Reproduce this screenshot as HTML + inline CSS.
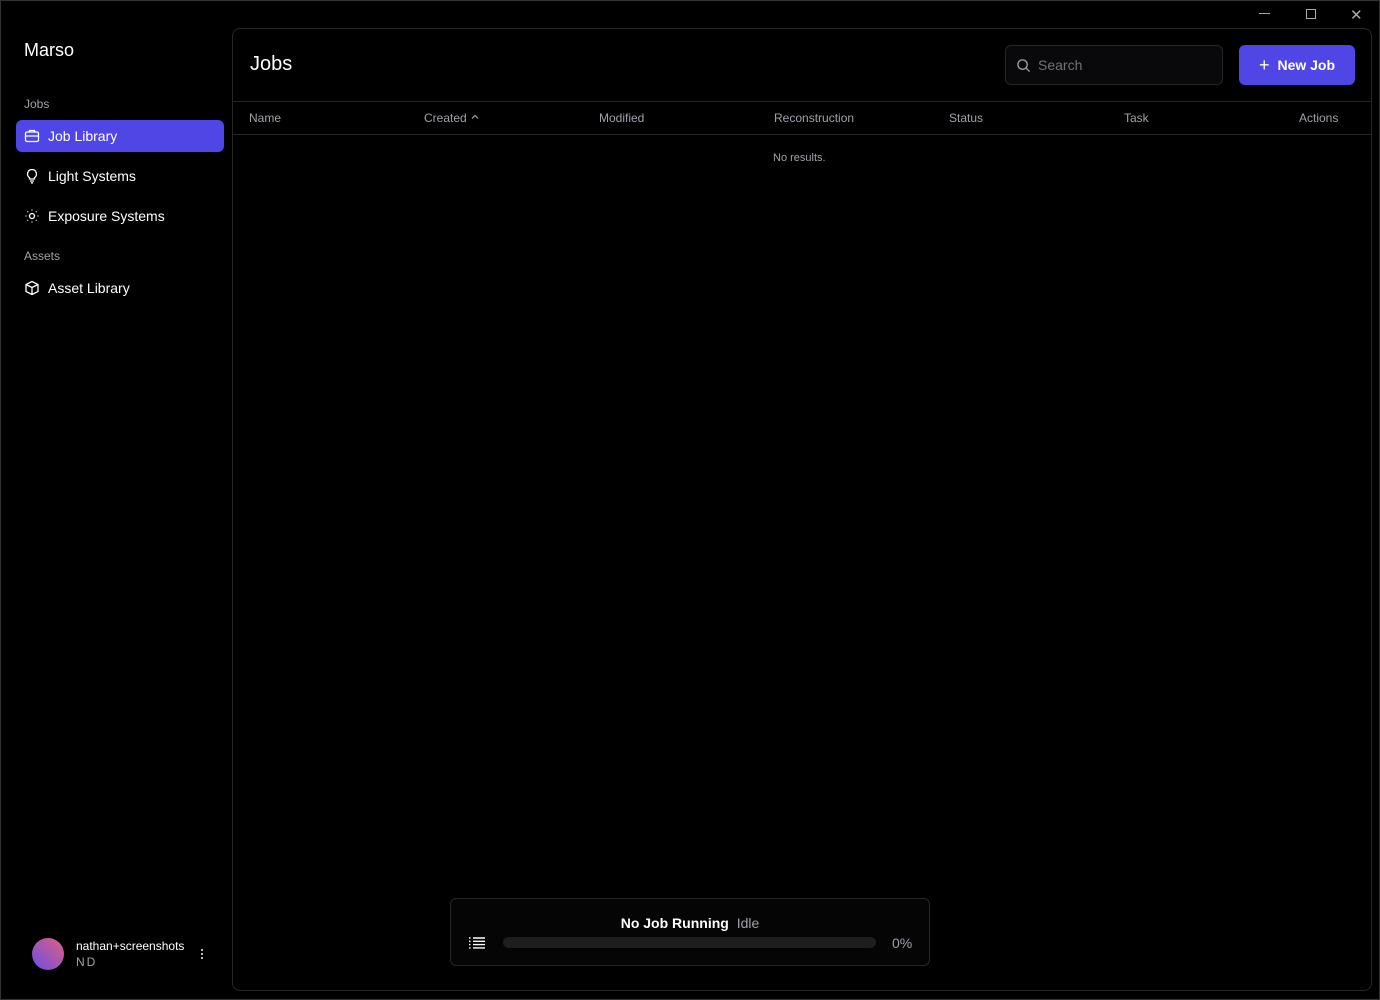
<!DOCTYPE html>
<html><head><meta charset="utf-8"><style>
*{box-sizing:border-box;margin:0;padding:0}
body{width:1380px;height:1000px;background:#000;font-family:"Liberation Sans",sans-serif;color:#fff;position:relative;overflow:hidden}
.abs{position:absolute}
.brand{left:24px;top:40px;font-size:18px}
.sec{left:24px;font-size:12px;color:#a1a1aa}
.item{left:16px;width:208px;height:32px;border-radius:6px;display:flex;align-items:center;padding-left:8px;font-size:14px;gap:8px}
.item svg{width:16px;height:16px}
.active{background:#4f46e5}
.main{left:232px;top:28px;width:1140px;height:963px;border:1px solid #27272a;border-radius:8px}
.h1{left:17px;top:24px;font-size:20px}
.search{left:772px;top:16px;width:218px;height:40px;border:1px solid #27272a;border-radius:6px;background:#09090b;color:#71717a;font-size:14px;display:flex;align-items:center;padding-left:32px}
.btn{left:1006px;top:16px;width:116px;height:40px;background:#4f46e5;border-radius:6px;font-size:14px;font-weight:bold;display:flex;align-items:center;justify-content:center;gap:8px}
.line{left:0;width:1138px;height:1px;background:#27272a}
.th{top:82px;font-size:12px;color:#a1a1aa}
.status{left:217px;top:869px;width:480px;height:68px;border:1px solid #27272a;border-radius:6px;background:#050505}
</style></head><body>
<div class="abs" style="left:0;top:0;width:1380px;height:1000px;border:1px solid #333;pointer-events:none"></div>
<div class="abs" style="left:1259px;top:13px;width:11px;height:1px;background:#aaa"></div>
<div class="abs" style="left:1306px;top:9px;width:10px;height:10px;border:1px solid #aaa"></div>
<div class="abs" style="left:1350px;top:6px;font-size:15px;color:#aaa">✕</div>
<div class="abs brand">Marso</div>
<div class="abs sec" style="top:97px">Jobs</div>
<div class="abs item active" style="top:120px"><svg viewBox="0 0 16 16" fill="none" stroke="#fff" stroke-width="1.3"><rect x="1.5" y="4" width="13" height="9.5" rx="1.5"/><path d="M5.5 4V2.5h5V4M1.5 8h13"/></svg>Job Library</div>
<div class="abs item" style="top:160px"><svg viewBox="0 0 16 16" fill="none" stroke="#fff" stroke-width="1.3"><path d="M8 1.5a4.5 4.5 0 0 0-2.5 8.2V11h5V9.7A4.5 4.5 0 0 0 8 1.5zM6 13h4M7 14.8h2"/></svg>Light Systems</div>
<div class="abs item" style="top:200px"><svg viewBox="0 0 16 16" fill="none" stroke="#fff" stroke-width="1.3"><circle cx="8" cy="8" r="2.5"/><path d="M8 1.5v1M8 13.5v1M1.5 8h1M13.5 8h1M3.4 3.4l.7.7M11.9 11.9l.7.7M3.4 12.6l.7-.7M11.9 4.1l.7-.7"/></svg>Exposure Systems</div>
<div class="abs sec" style="top:249px">Assets</div>
<div class="abs item" style="top:272px"><svg viewBox="0 0 16 16" fill="none" stroke="#fff" stroke-width="1.3"><path d="M8 1.5l6 3v7l-6 3-6-3v-7zM2 4.5l6 3 6-3M8 7.5v7"/></svg>Asset Library</div>
<div class="abs" style="left:32px;top:938px;width:32px;height:32px;border-radius:50%;background:linear-gradient(225deg,#e0607e,#6a4ee6)"></div>
<div class="abs" style="left:76px;top:939px;font-size:12px">nathan+screenshots</div>
<div class="abs" style="left:76px;top:955px;font-size:12px;color:#a1a1aa;letter-spacing:2px">ND</div>
<div class="abs" style="left:201px;top:949px;width:2px;height:2px;background:#bbb;box-shadow:0 4px #bbb,0 8px #bbb"></div>
<div class="abs main">
<div class="abs h1">Jobs</div>
<div class="abs search"><svg class="abs" style="left:10px;top:12px" width="15" height="15" viewBox="0 0 16 16" fill="none" stroke="#a1a1aa" stroke-width="1.4"><circle cx="7" cy="7" r="5"/><path d="M11 11l3.5 3.5"/></svg>Search</div>
<div class="abs btn"><span style="font-weight:normal;font-size:18px">+</span>New Job</div>
<div class="abs line" style="top:72px"></div>
<div class="abs th" style="left:16px">Name</div>
<div class="abs th" style="left:191px">Created <svg width="10" height="8" viewBox="0 0 10 8" fill="none" stroke="#a1a1aa" stroke-width="1.2" style="vertical-align:1px"><path d="M2 5.5l3-3 3 3"/></svg></div>
<div class="abs th" style="left:366px">Modified</div>
<div class="abs th" style="left:541px">Reconstruction</div>
<div class="abs th" style="left:716px">Status</div>
<div class="abs th" style="left:891px">Task</div>
<div class="abs th" style="left:1066px">Actions</div>
<div class="abs line" style="top:105px"></div>
<div class="abs" style="left:540px;top:123px;font-size:11px;color:#a1a1aa">No results.</div>
<div class="abs status">
<div class="abs" style="left:0;width:478px;top:16px;text-align:center;font-size:14px"><b>No Job Running</b> <span style="color:#a1a1aa;margin-left:4px">Idle</span></div>
<svg class="abs" style="left:18px;top:38px" width="16" height="12" viewBox="0 0 16 12" stroke="#fff" stroke-width="1.4"><path d="M0 1h1.5M4 1h12M0 4.3h1.5M4 4.3h12M0 7.6h1.5M4 7.6h12M0 10.9h1.5M4 10.9h12"/></svg>
<div class="abs" style="left:52px;top:38px;width:373px;height:11px;border-radius:6px;background:#1e1e21"></div>
<div class="abs" style="left:441px;top:36px;font-size:14px;color:#a1a1aa">0%</div>
</div>
</div>
</body></html>
